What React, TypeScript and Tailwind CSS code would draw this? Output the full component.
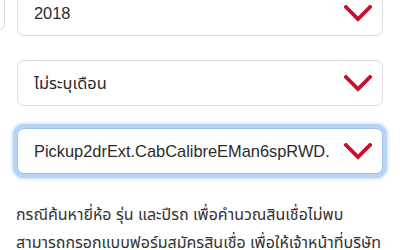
import React from 'react';

const font = { fontFamily: '"Liberation Sans", "Noto Sans", "Noto Sans Thai", sans-serif' };

function Chevron() {
  return (
    <svg width="28" height="17" viewBox="0 0 28 17" className="shrink-0">
      <polyline
        points="2,2 14,14 26,2"
        fill="none"
        stroke="#c8102e"
        strokeWidth="3.8"
        strokeLinecap="square"
      />
    </svg>
  );
}

function Select({ value, focused = false }: { value: string; focused?: boolean }) {
  return (
    <div
      className={`flex h-[46px] min-w-0 items-center justify-between gap-1 rounded-[7px] border bg-white pl-[16px] pr-[10px] ${
        focused
          ? 'border-[#9cc3ef] shadow-[0_0_0_4px_#b6d4f7,0_0_3px_5px_rgba(160,200,245,0.6)]'
          : 'border-[#dcdcdc]'
      }`}
    >
      <span className="min-w-0 overflow-hidden whitespace-nowrap text-[16.4px] text-[#2b2b2b]">{value}</span>
      <Chevron />
    </div>
  );
}

export default function App() {
  return (
    <div className="h-[250px] w-[400px] overflow-hidden bg-white" style={font}>
      <div className="-mt-[10px] flex">
        {/* previous field, cut off at the left edge */}
        <div className="-ml-[35px] h-[40px] w-[40px] shrink-0 rounded-[6px] border border-[#dcdcdc]" />
        <div className="ml-[12px] mr-[17px] flex min-w-0 flex-1 flex-col gap-[24px]">
          <Select value="2018" />
          <Select value="ไม่ระบุเดือน" />
          <div className="-mt-[2px]">
            <Select value="Pickup2drExt.CabCalibreEMan6spRWD." focused />
          </div>
        </div>
      </div>
      <p className="mt-[27px] px-[16px] text-[16px] leading-[28px] text-[#333]">
        กรณีค้นหายี่ห้อ รุ่น และปีรถ เพื่อคำนวณสินเชื่อไม่พบ
        <br />
        สามารถกรอกแบบฟอร์มสมัครสินเชื่อ เพื่อให้เจ้าหน้าที่บริษัท
      </p>
    </div>
  );
}
